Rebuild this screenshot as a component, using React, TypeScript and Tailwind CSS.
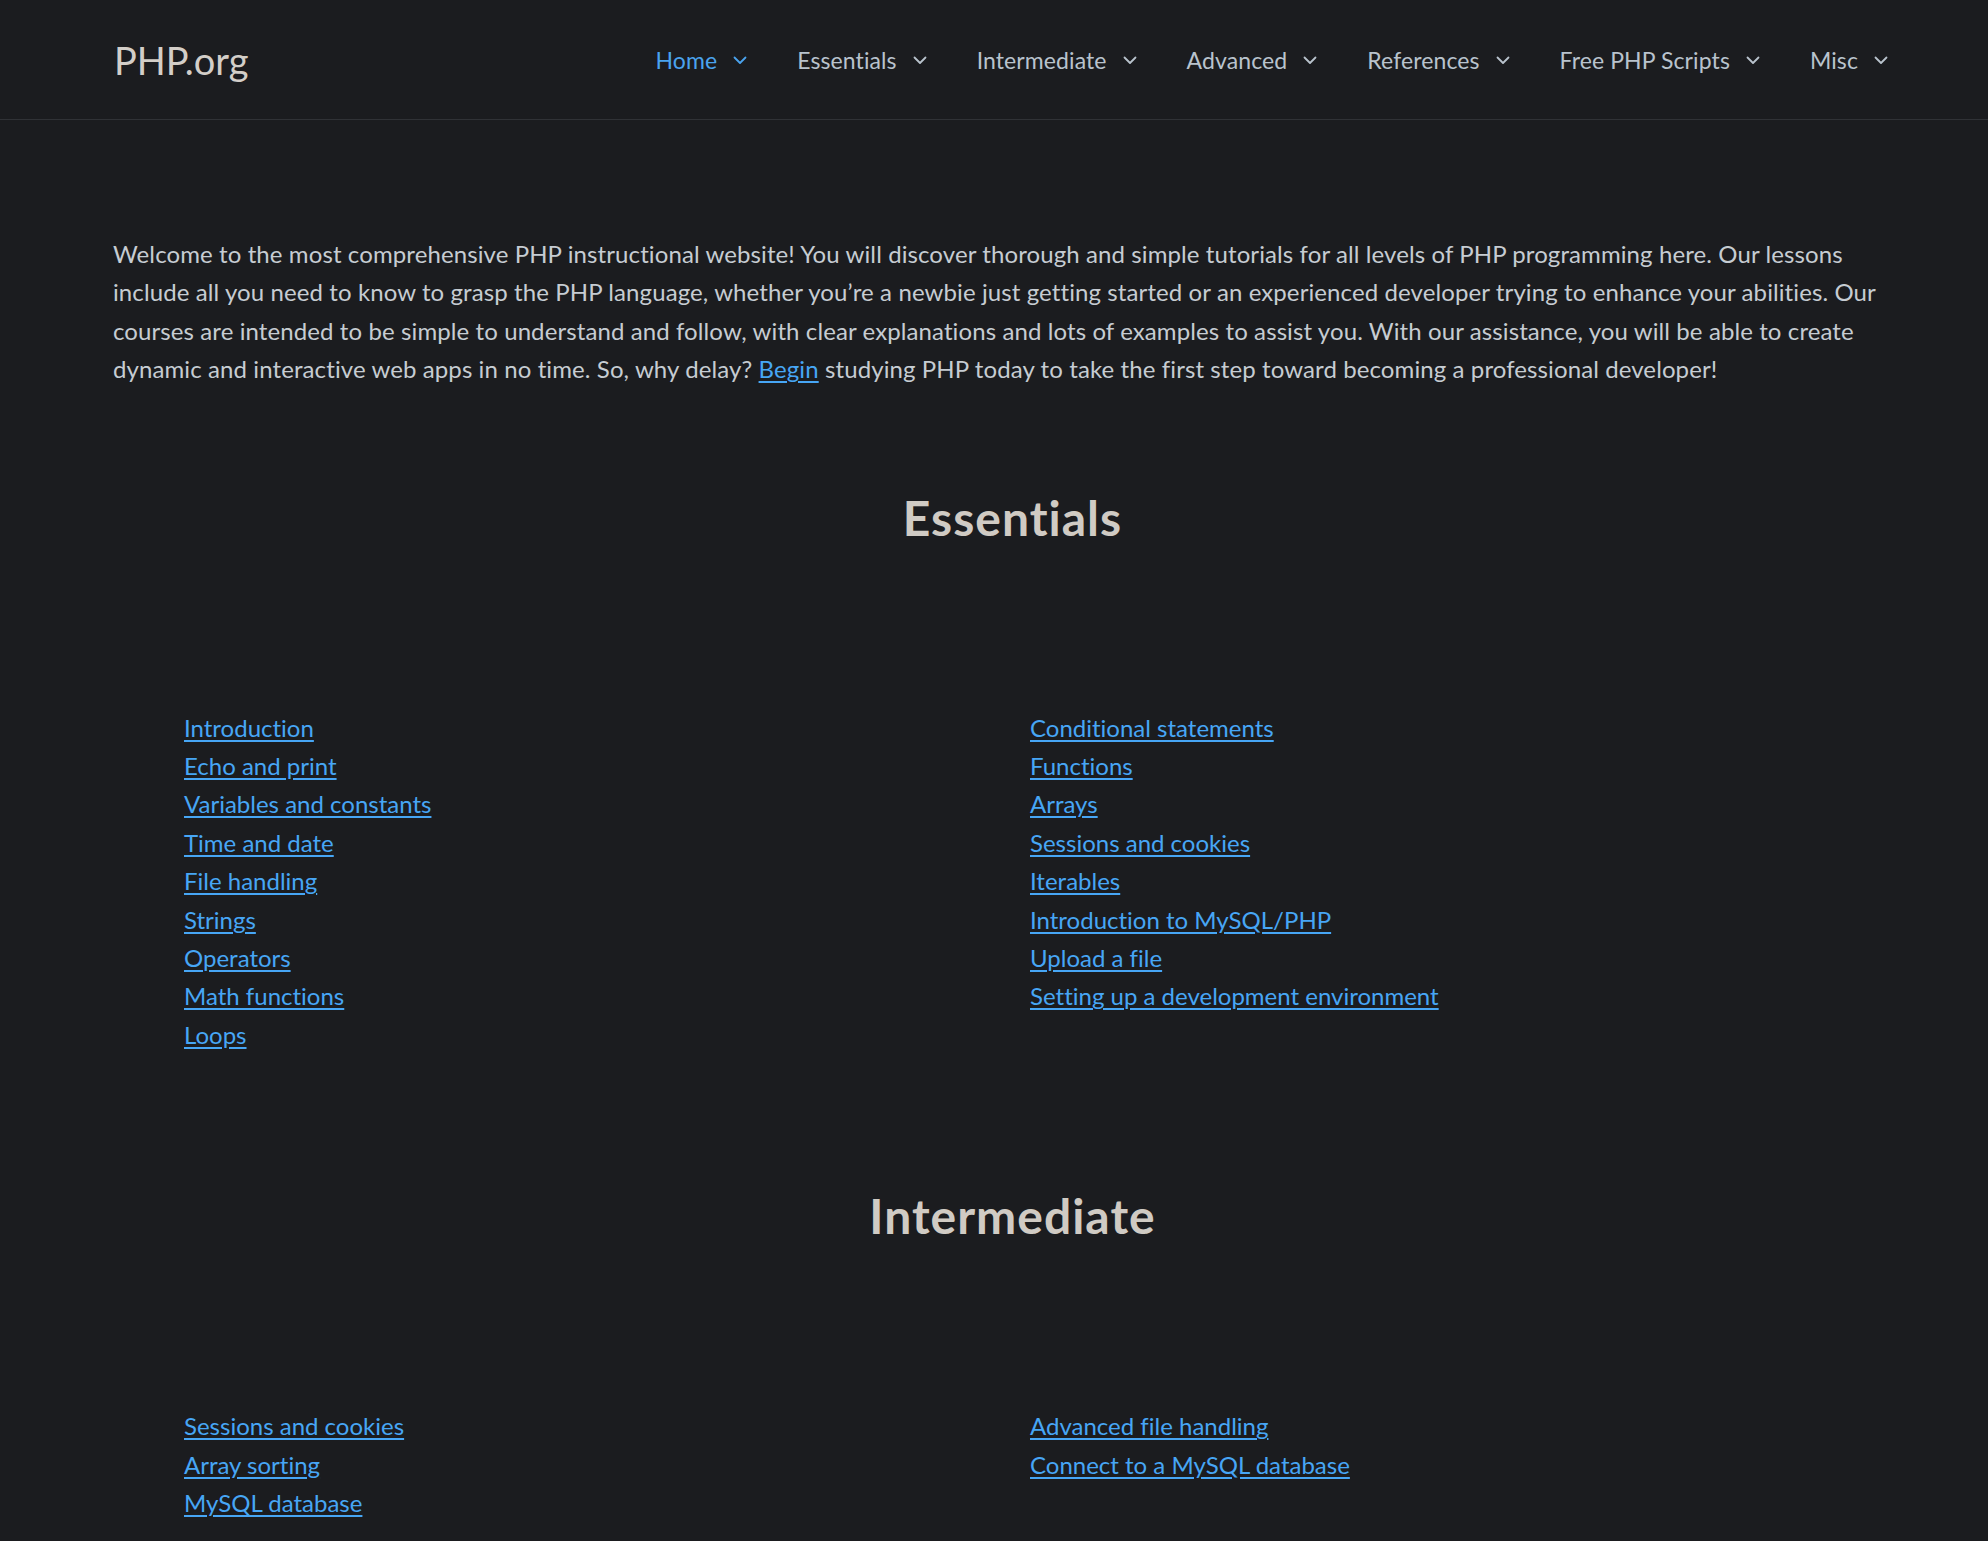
import React from "react";

const navItems = [
  { label: "Home", active: true },
  { label: "Essentials" },
  { label: "Intermediate" },
  { label: "Advanced" },
  { label: "References" },
  { label: "Free PHP Scripts" },
  { label: "Misc" },
];

const essentialsLeft = [
  "Introduction",
  "Echo and print",
  "Variables and constants",
  "Time and date",
  "File handling",
  "Strings",
  "Operators",
  "Math functions",
  "Loops",
];
const essentialsRight = [
  "Conditional statements",
  "Functions",
  "Arrays",
  "Sessions and cookies",
  "Iterables",
  "Introduction to MySQL/PHP",
  "Upload a file",
  "Setting up a development environment",
];
const interLeft = ["Sessions and cookies", "Array sorting", "MySQL database"];
const interRight = ["Advanced file handling", "Connect to a MySQL database"];

function Chevron() {
  return (
    <svg width="14" height="9" viewBox="0 0 14 9" fill="none" className="shrink-0">
      <polyline points="1.5,1.5 7,7 12.5,1.5" stroke="currentColor" strokeWidth="1.8" strokeLinecap="round" strokeLinejoin="round" />
    </svg>
  );
}

function LinkList({ items }: { items: string[] }) {
  return (
    <ul className="flex flex-col">
      {items.map((t) => (
        <li key={t} className="leading-[38.4px]">
          <a href="#" className="text-[#47a6f5] underline decoration-[1.5px] underline-offset-[3px]">
            {t}
          </a>
        </li>
      ))}
    </ul>
  );
}

export default function App() {
  return (
    <div
      className="min-h-[1541px] w-full bg-[#1b1c1f] text-[24px] [font-variant-ligatures:none]"
      style={{ fontFamily: "Lato, 'Open Sans', sans-serif" }}
    >
      <header className="flex h-[120px] items-center justify-between border-b border-[#303236] pl-[114px] pr-[100px] pt-[2px]">
        <div className="text-[38px] leading-none text-[#d3cec8] pb-[2px]">PHP.org</div>
        <nav className="flex items-center gap-[50px]">
          {navItems.map((n) => (
            <div
              key={n.label}
              className={`flex items-center gap-[16px] text-[23px] tracking-[0.1px] ${n.active ? "text-[#4aa3ee]" : "text-[#b9c3cd]"}`}
            >
              <span>{n.label}</span>
              <Chevron />
            </div>
          ))}
        </nav>
      </header>

      <main className="pl-[113px] pr-[100px]">
        <p className="pt-[115px] leading-[38.4px] tracking-[0.1px] text-[#c6ccd2]">
          <span className="block whitespace-nowrap">
            Welcome to the most comprehensive PHP instructional website! You will discover thorough and simple tutorials for all levels of PHP programming here. Our lessons
          </span>
          <span className="block whitespace-nowrap">
            include all you need to know to grasp the PHP language, whether you’re a newbie just getting started or an experienced developer trying to enhance your abilities. Our
          </span>
          <span className="block whitespace-nowrap">
            courses are intended to be simple to understand and follow, with clear explanations and lots of examples to assist you. With our assistance, you will be able to create
          </span>
          <span className="block whitespace-nowrap">
            dynamic and interactive web apps in no time. So, why delay?{" "}
            <a href="#" className="text-[#47a6f5] underline decoration-[1.5px] underline-offset-[3px]">
              Begin
            </a>{" "}
            studying PHP today to take the first step toward becoming a professional developer!
          </span>
        </p>

        <h2 className="mt-[101px] pl-[24px] text-center text-[48px] font-bold leading-[56px] tracking-[1px] text-[#d0cbc4]">
          Essentials
        </h2>
        <div className="mt-[163px] grid grid-cols-[846px_1fr] pl-[71px]">
          <LinkList items={essentialsLeft} />
          <LinkList items={essentialsRight} />
        </div>

        <h2 className="mt-[134px] pl-[24px] text-center text-[48px] font-bold leading-[56px] tracking-[1px] text-[#d0cbc4]">
          Intermediate
        </h2>
        <div className="mt-[163px] grid grid-cols-[846px_1fr] pl-[71px]">
          <LinkList items={interLeft} />
          <LinkList items={interRight} />
        </div>
      </main>
    </div>
  );
}
